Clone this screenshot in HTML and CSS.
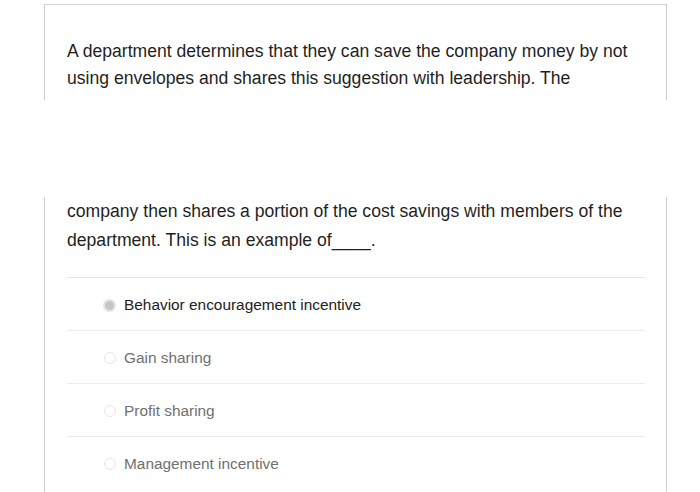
FILE: index.html
```html
<!DOCTYPE html>
<html>
<head>
<meta charset="utf-8">
<link rel="stylesheet" href="styles.css">
</head>
<body>
<div class="page">
  <section class="card card-top">
    <p class="q q1">A department determines that they can save the company money by not<br>using envelopes and shares this suggestion with leadership. The</p>
  </section>
  <div class="gap"></div>
  <section class="card card-bottom">
    <p class="q q2">company then shares a portion of the cost savings with members of the<br>department. This is an example of____.</p>
    <ul class="options">
      <li class="opt selected"><span class="radio"></span><span class="label">Behavior encouragement incentive</span></li>
      <li class="opt"><span class="radio"></span><span class="label">Gain sharing</span></li>
      <li class="opt"><span class="radio"></span><span class="label">Profit sharing</span></li>
      <li class="opt"><span class="radio"></span><span class="label">Management incentive</span></li>
    </ul>
  </section>
</div>
</body>
</html>
```

FILE: styles.css
```css
html, body {
  margin: 0;
  padding: 0;
  background: #fff;
}
body {
  font-family: "Liberation Sans", Arial, sans-serif;
  color: #222;
  width: 700px;
  height: 492px;
  overflow: hidden;
}
.page {
  padding-top: 4px;
  padding-left: 44px;
  width: 623px;
}
.card {
  border-left: 1px solid #cfcfcf;
  border-right: 1px solid #cfcfcf;
  padding: 0 21px 0 22px;
}
.card-top {
  border-top: 1px solid #cfcfcf;
  height: 96px;
  padding-top: 33px;
  box-sizing: border-box;
}
.gap {
  height: 97px;
}
.card-bottom {
  height: 300px;
}
.q {
  margin: 0;
  font-size: 17.6px;
  color: #1f1f1f;
  white-space: nowrap;
}
.q1 {
  line-height: 27px;
}
.q2 {
  line-height: 29px;
  padding-bottom: 22px;
  border-bottom: 1px solid #e6e6e6;
}
.options {
  list-style: none;
  margin: 0;
  padding: 0;
}
.opt {
  display: flex;
  align-items: center;
  height: 50px;
  padding-top: 2px;
  padding-left: 37px;
  border-bottom: 1px solid #ececec;
  font-size: 15.4px;
  color: #707070;
}
.opt:last-child {
  border-bottom: none;
}
.radio {
  width: 12px;
  height: 12px;
  border-radius: 50%;
  border: 1px solid #e6e6e6;
  box-sizing: border-box;
  margin-right: 8px;
  flex: none;
}
.selected {
  color: #222;
}
.selected .radio {
  width: 13px;
  height: 13px;
  margin-left: -1px;
  background: #c6c6c6;
  border: 2px solid #e4e4e4;
}
```
